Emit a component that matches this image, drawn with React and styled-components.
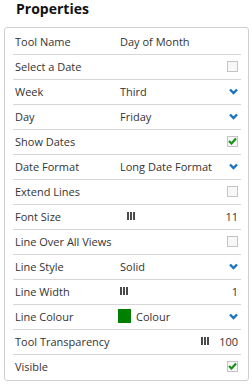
import styled, { createGlobalStyle } from 'styled-components';

const __BORDER = '#cfcfcf';
const __LINE = '#d6d6d6';
const __TEXT = '#333333';
const __BLUE = '#1a73c0';
const __GREEN = '#17921a';

const GlobalStyle = createGlobalStyle`
    body{
        margin:0;
        background:#ffffff;
        font-family:"Open Sans", "Liberation Sans", sans-serif;
        color:${__TEXT};
    }
`;

const Wrapper = styled.div`
    width:252px;
    height:386px;
    overflow:hidden;
`;

const Title = styled.h1`
    margin:0 0 10px 16px;
    font-size:14px;
    line-height:17px;
    font-weight:700;
    color:#111;
`;

const Panel = styled.div`
    box-sizing:border-box;
    width:245px;
    margin-left:4px;
    border:1px solid ${__BORDER};
    border-radius:3px;
    padding:2px 7px 1px 8px;
`;

const Row = styled.div`
    display:grid;
    grid-template-columns:${props => props.wide ? '1fr auto' : '105px 1fr auto'};
    align-items:center;
    height:24px;
    padding:0 3px 0 2px;
    border-bottom:${props => props.last ? 'none' : `1px solid ${__LINE}`};
    font-size:11px;
    line-height:15px;
`;

const Label = styled.span`
    white-space:nowrap;
    padding-bottom:2px;
`;

const Value = styled.span`
    display:flex;
    align-items:center;
    gap:5px;
    white-space:nowrap;
    padding-bottom:2px;
    margin-left:${props => props.shift || 0}px;
`;

const Right = styled.span`
    display:flex;
    align-items:center;
    justify-content:flex-end;
    gap:10px;
    padding-bottom:2px;
`;

const Box = styled.span`
    box-sizing:border-box;
    display:inline-flex;
    align-items:center;
    justify-content:center;
    width:11px;
    height:11px;
    border:1px solid #c4c4c4;
    background:#f7f7f7;
`;

const Bars = styled.span`
    display:inline-flex;
    gap:1px;
    height:8px;
    & > i{
        width:2px;
        height:8px;
        background:#4a4a4a;
    }
`;

const Swatch = styled.span`
    width:13px;
    height:14px;
    background:${props => props.color};
`;

const Chevron = () => (
    <svg width="9" height="7" viewBox="0 0 9 7">
        <polyline points="1,1.5 4.5,5 8,1.5" fill="none" stroke={__BLUE} strokeWidth="2.4" />
    </svg>
);

const Check = ({ on }) => (
    <Box>
        {on && (
            <svg width="9" height="8" viewBox="0 0 9 8">
                <polyline points="1,4 3.5,6.5 8,1.5" fill="none" stroke={__GREEN} strokeWidth="2.2" />
            </svg>
        )}
    </Box>
);

const Slider = () => <Bars><i /><i /><i /></Bars>;

const App = () => {
    return (
        <>
            <GlobalStyle />
            <Wrapper>
                <Title>Properties</Title>
                <Panel>
                    <Row>
                        <Label>Tool Name</Label>
                        <Value>Day of Month</Value>
                        <Right />
                    </Row>
                    <Row wide>
                        <Label>Select a Date</Label>
                        <Right><Check /></Right>
                    </Row>
                    <Row>
                        <Label>Week</Label>
                        <Value>Third</Value>
                        <Right><Chevron /></Right>
                    </Row>
                    <Row>
                        <Label>Day</Label>
                        <Value>Friday</Value>
                        <Right><Chevron /></Right>
                    </Row>
                    <Row wide>
                        <Label>Show Dates</Label>
                        <Right><Check on /></Right>
                    </Row>
                    <Row>
                        <Label>Date Format</Label>
                        <Value>Long Date Format</Value>
                        <Right><Chevron /></Right>
                    </Row>
                    <Row wide>
                        <Label>Extend Lines</Label>
                        <Right><Check /></Right>
                    </Row>
                    <Row>
                        <Label>Font Size</Label>
                        <Value shift={7}><Slider /></Value>
                        <Right>11</Right>
                    </Row>
                    <Row wide>
                        <Label>Line Over All Views</Label>
                        <Right><Check /></Right>
                    </Row>
                    <Row>
                        <Label>Line Style</Label>
                        <Value>Solid</Value>
                        <Right><Chevron /></Right>
                    </Row>
                    <Row>
                        <Label>Line Width</Label>
                        <Value><Slider /></Value>
                        <Right>1</Right>
                    </Row>
                    <Row>
                        <Label>Line Colour</Label>
                        <Value shift={-2}><Swatch color="#008000" />Colour</Value>
                        <Right><Chevron /></Right>
                    </Row>
                    <Row wide>
                        <Label>Tool Transparency</Label>
                        <Right><Slider />100</Right>
                    </Row>
                    <Row wide last>
                        <Label>Visible</Label>
                        <Right><Check on /></Right>
                    </Row>
                </Panel>
            </Wrapper>
        </>
    );
}

export default App;
